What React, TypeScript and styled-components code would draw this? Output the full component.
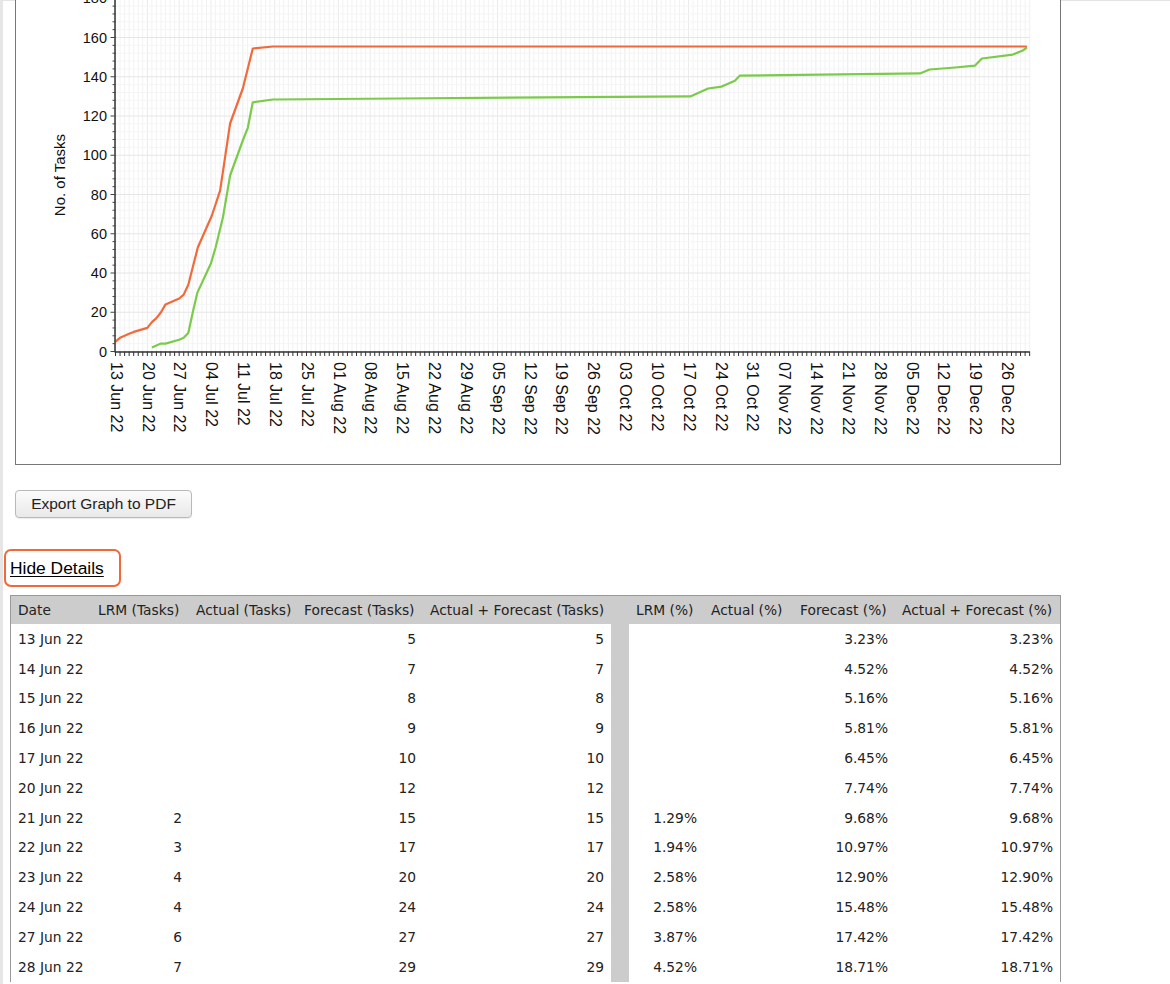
import styled, { createGlobalStyle } from 'styled-components';

const GlobalStyle = createGlobalStyle`
  html, body {
    margin: 0;
    padding: 0;
    background: #ffffff;
  }
  body {
    font-family: "Liberation Sans", Arial, sans-serif;
    color: #111;
  }
`;

const Page = styled.div`
  border-top: 1px solid #e4e4e4;
  border-left: 3px solid #e6e6e6;
  padding-left: 7px;
  min-height: 984px;
  box-sizing: border-box;
`;

const ChartBox = styled.div`
  margin-top: -41px;
  margin-left: 5px;
  width: 1046px;
  height: 505px;
  box-sizing: border-box;
  border: 1px solid #777;
  background: #fff;
`;

const ChartSvg = styled.svg`
  display: block;
  font-family: "Liberation Sans", Arial, sans-serif;
`;

const ExportButton = styled.button`
  display: block;
  margin: 25px 0 0 5px;
  width: 177px;
  height: 28px;
  padding: 0 14px;
  font-family: "Liberation Sans", Arial, sans-serif;
  font-size: 15.5px;
  color: #222;
  background: linear-gradient(#fbfbfb, #e9e9e9);
  border: 1px solid #b9b9b9;
  border-radius: 4px;
  box-shadow: 0 1px 1px rgba(0, 0, 0, 0.08);
`;

const DetailsToggle = styled.div`
  display: flex;
  align-items: center;
  width: 117px;
  height: 38px;
  box-sizing: border-box;
  margin: 31px 0 0 -6px;
  padding-left: 4px;
  border: 2.5px solid #f0693a;
  border-radius: 7px;
`;

const DetailsLink = styled.a`
  font-size: 17.4px;
  color: #000;
  text-decoration: underline;
  text-underline-offset: 2px;
  cursor: pointer;
`;

const TableFrame = styled.div`
  margin-top: 8px;
  width: 1051px;
  box-sizing: border-box;
  border: 1px solid #999;
  border-bottom: none;
`;

const DataTable = styled.table`
  width: 1049px;
  table-layout: fixed;
  border-collapse: collapse;
  font-family: "DejaVu Sans", Verdana, sans-serif;
  font-size: 13.8px;
  color: #222;
`;

const HeadRow = styled.tr`
  height: 28px;
  background: #cccccc;
`;

const BodyRow = styled.tr`
  height: 29.8px;
  background: #fff;
`;

const HeadCell = styled.th`
  padding: 0 1px 0 7px;
  text-align: left;
  font-weight: normal;
  white-space: nowrap;
  overflow: hidden;
`;

const Cell = styled.td<{ $align?: 'left' | 'right' }>`
  padding: 0 7px;
  text-align: ${(p) => p.$align ?? 'right'};
  white-space: nowrap;
`;

const GapCell = styled.td`
  padding: 0;
  background: #cccccc;
`;

// chart scale
const X0 = 115.5;
const DAY = 4.548;
const Y0 = 351.5;
const UNIT = 1.9625;
const LAST_DAY = 201;
const px = (d: number) => X0 + d * DAY;
const py = (v: number) => Y0 - v * UNIT;

const forecastLine: [number, number][] = [
  [0, 5], [1, 7], [2, 8], [3, 9], [4, 10], [7, 12], [8, 15], [9, 17],
  [10, 20], [11, 24], [14, 27], [15, 29], [16, 34], [18.1, 53], [21.2, 69.3],
  [23, 82], [25.2, 116.2], [28, 134], [30.2, 154.4], [34.6, 155.4], [200.4, 155.4],
];

const lrmLine: [number, number][] = [
  [8, 2], [9, 3], [10, 4], [11, 4], [14, 6], [15, 7], [16, 9.5], [17, 20],
  [18, 30], [21, 45], [22, 53], [23.6, 68], [25.2, 89.7], [28, 107.5],
  [29.1, 114], [30.2, 127], [34.6, 128.4], [62.5, 128.9], [126.4, 130],
  [130.3, 134], [133.3, 135], [136.2, 138], [137.3, 140.6], [176.9, 141.7],
  [179, 143.7], [184.6, 144.7], [189, 145.7], [190.5, 149.3], [197.3, 151.3],
  [199.5, 153.4], [200.4, 154.9],
];

const MONTHS = ['Jan', 'Feb', 'Mar', 'Apr', 'May', 'Jun', 'Jul', 'Aug', 'Sep', 'Oct', 'Nov', 'Dec'];

function weekLabel(week: number) {
  const d = new Date(Date.UTC(2022, 5, 13 + week * 7));
  const day = String(d.getUTCDate()).padStart(2, '0');
  return `${day} ${MONTHS[d.getUTCMonth()]} 22`;
}

const toPoints = (line: [number, number][]) =>
  line.map(([d, v]) => `${px(d).toFixed(1)},${py(v).toFixed(1)}`).join(' ');

function BurnChart() {
  const days = Array.from({ length: LAST_DAY + 1 }, (_, i) => i);
  const minorSteps = Array.from({ length: 46 }, (_, i) => i * 4);
  const majorSteps = Array.from({ length: 10 }, (_, i) => i * 20);
  const weeks = Array.from({ length: 29 }, (_, i) => i);
  const right = px(LAST_DAY);
  const top = py(200);

  return (
    <ChartSvg width={1044} height={503} viewBox="16 -39 1044 503">
      {days.map((d) => (
        <line
          key={`v${d}`}
          x1={px(d)}
          x2={px(d)}
          y1={top}
          y2={Y0}
          stroke={d % 7 === 0 ? '#eaeaea' : '#f2f2f2'}
          strokeWidth={1}
        />
      ))}
      {minorSteps.map((v) => (
        <line
          key={`h${v}`}
          x1={X0}
          x2={right}
          y1={py(v)}
          y2={py(v)}
          stroke={v % 20 === 0 ? '#e6e6e6' : '#f5f5f5'}
          strokeWidth={1}
        />
      ))}

      <polyline points={toPoints(lrmLine)} fill="none" stroke="#7bcb4b" strokeWidth={2.2} strokeLinejoin="round" />
      <polyline points={toPoints(forecastLine)} fill="none" stroke="#f26a3b" strokeWidth={2.2} strokeLinejoin="round" />

      {/* axes */}
      <line x1={X0 - 0.5} x2={X0 - 0.5} y1={top} y2={Y0 + 0.5} stroke="#333" strokeWidth={1.5} />
      <line x1={X0 - 1} x2={right} y1={Y0 + 0.5} y2={Y0 + 0.5} stroke="#333" strokeWidth={1.5} />

      {minorSteps.map((v) => (
        <line
          key={`yt${v}`}
          x1={v % 20 === 0 ? X0 - 5 : X0 - 3}
          x2={X0}
          y1={py(v)}
          y2={py(v)}
          stroke="#444"
          strokeWidth={1}
        />
      ))}
      {days.map((d) => (
        <line key={`xt${d}`} x1={px(d)} x2={px(d)} y1={Y0} y2={Y0 + 4.5} stroke="#333" strokeWidth={1} />
      ))}

      {majorSteps.map((v) => (
        <text key={`yl${v}`} x={107} y={py(v)} dy="0.36em" textAnchor="end" fontSize={14.5} fill="#111">
          {v}
        </text>
      ))}
      {weeks.map((w) => {
        const x = px(w * 7) + 1;
        return (
          <text
            key={`xl${w}`}
            x={x}
            y={362}
            transform={`rotate(90 ${x} 362)`}
            dy="0.36em"
            fontSize={16}
            fill="#111"
          >
            {weekLabel(w)}
          </text>
        );
      })}

      <text x={60} y={175} transform="rotate(-90 60 175)" dy="0.36em" textAnchor="middle" fontSize={15} fill="#111">
        No. of Tasks
      </text>
    </ChartSvg>
  );
}

const columns = [
  { title: 'Date', width: 80 },
  { title: 'LRM (Tasks)', width: 98 },
  { title: 'Actual (Tasks)', width: 108 },
  { title: 'Forecast (Tasks)', width: 126 },
  { title: 'Actual + Forecast (Tasks)', width: 188 },
  { title: '', width: 18 },
  { title: 'LRM (%)', width: 75 },
  { title: 'Actual (%)', width: 89 },
  { title: 'Forecast (%)', width: 102 },
  { title: 'Actual + Forecast (%)', width: 165 },
];

interface IDetailRow {
  date: string;
  lrm: string;
  actual: string;
  forecast: string;
  total: string;
  lrmPct: string;
  actualPct: string;
  forecastPct: string;
  totalPct: string;
}

const row = (date: string, lrm: string, forecast: string, lrmPct: string, pct: string): IDetailRow => ({
  date,
  lrm,
  actual: '',
  forecast,
  total: forecast,
  lrmPct,
  actualPct: '',
  forecastPct: pct,
  totalPct: pct,
});

const details: IDetailRow[] = [
  row('13 Jun 22', '', '5', '', '3.23%'),
  row('14 Jun 22', '', '7', '', '4.52%'),
  row('15 Jun 22', '', '8', '', '5.16%'),
  row('16 Jun 22', '', '9', '', '5.81%'),
  row('17 Jun 22', '', '10', '', '6.45%'),
  row('20 Jun 22', '', '12', '', '7.74%'),
  row('21 Jun 22', '2', '15', '1.29%', '9.68%'),
  row('22 Jun 22', '3', '17', '1.94%', '10.97%'),
  row('23 Jun 22', '4', '20', '2.58%', '12.90%'),
  row('24 Jun 22', '4', '24', '2.58%', '15.48%'),
  row('27 Jun 22', '6', '27', '3.87%', '17.42%'),
  row('28 Jun 22', '7', '29', '4.52%', '18.71%'),
];

function App() {
  return (
    <>
      <GlobalStyle />
      <Page>
        <ChartBox>
          <BurnChart />
        </ChartBox>

        <ExportButton type="button">Export Graph to PDF</ExportButton>

        <DetailsToggle>
          <DetailsLink>Hide Details</DetailsLink>
        </DetailsToggle>

        <TableFrame>
          <DataTable>
            <colgroup>
              {columns.map((c, i) => (
                <col key={i} style={{ width: c.width }} />
              ))}
            </colgroup>
            <thead>
              <HeadRow>
                {columns.map((c, i) => (
                  <HeadCell key={i}>{c.title}</HeadCell>
                ))}
              </HeadRow>
            </thead>
            <tbody>
              {details.map((r) => (
                <BodyRow key={r.date}>
                  <Cell $align="left">{r.date}</Cell>
                  <Cell>{r.lrm}</Cell>
                  <Cell>{r.actual}</Cell>
                  <Cell>{r.forecast}</Cell>
                  <Cell>{r.total}</Cell>
                  <GapCell />
                  <Cell>{r.lrmPct}</Cell>
                  <Cell>{r.actualPct}</Cell>
                  <Cell>{r.forecastPct}</Cell>
                  <Cell>{r.totalPct}</Cell>
                </BodyRow>
              ))}
            </tbody>
          </DataTable>
        </TableFrame>
      </Page>
    </>
  );
}

export default App;
